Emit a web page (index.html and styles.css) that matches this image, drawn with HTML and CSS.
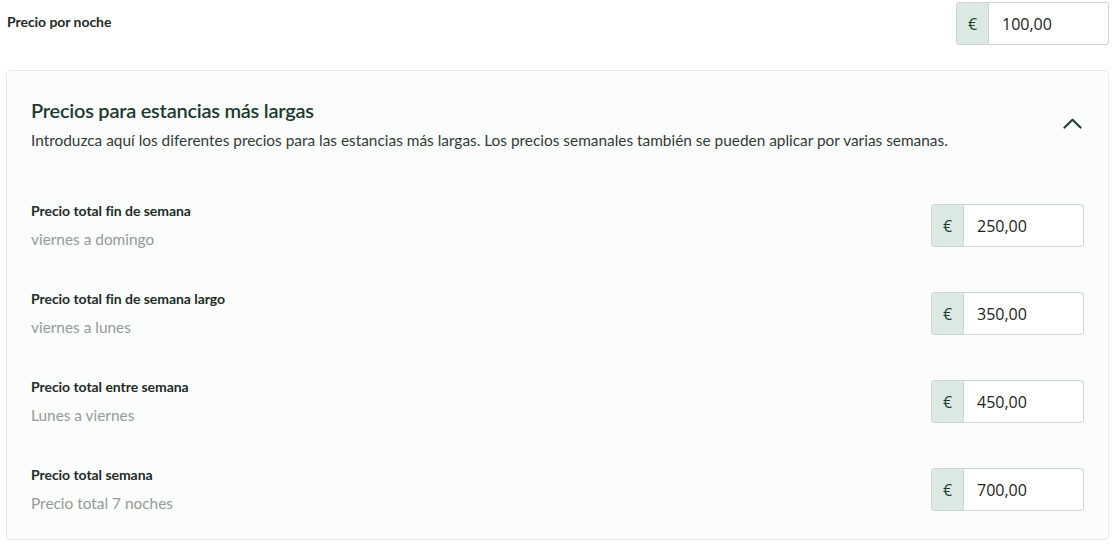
FILE: index.html
```html
<!DOCTYPE html>
<html lang="es">
<head>
    <meta charset="UTF-8">
    <meta name="viewport" content="width=device-width, initial-scale=1.0">
    <title>Precios</title>
    <link rel="stylesheet" href="styles.css">
</head>
<body>
    <div class="page">
        <div class="base-row">
            <label class="base-label" for="nightPrice">Precio por noche</label>
            <div class="price-input">
                <span class="currency">€</span>
                <input type="text" id="nightPrice" value="100,00">
            </div>
        </div>

        <div class="panel">
            <div class="panel-head">
                <div>
                    <h2 class="panel-title">Precios para estancias más largas</h2>
                    <p class="panel-desc">Introduzca aquí los diferentes precios para las estancias más largas. Los precios semanales también se pueden aplicar por varias semanas.</p>
                </div>
                <button class="toggle" aria-label="Cerrar">
                    <svg width="19" height="11" viewBox="0 0 19 11" fill="none" stroke="#1f4134" stroke-width="2.2" stroke-linecap="round" stroke-linejoin="round">
                        <path d="M1.5 9.5 L9.5 1.8 L17.5 9.5"/>
                    </svg>
                </button>
            </div>

            <div class="price-row">
                <div class="row-text">
                    <label class="row-label" for="weekendPrice">Precio total fin de semana</label>
                    <div class="row-sub">viernes a domingo</div>
                </div>
                <div class="price-input">
                    <span class="currency">€</span>
                    <input type="text" id="weekendPrice" value="250,00">
                </div>
            </div>

            <div class="price-row">
                <div class="row-text">
                    <label class="row-label" for="longWeekendPrice">Precio total fin de semana largo</label>
                    <div class="row-sub">viernes a lunes</div>
                </div>
                <div class="price-input">
                    <span class="currency">€</span>
                    <input type="text" id="longWeekendPrice" value="350,00">
                </div>
            </div>

            <div class="price-row">
                <div class="row-text">
                    <label class="row-label" for="midweekPrice">Precio total entre semana</label>
                    <div class="row-sub">Lunes a viernes</div>
                </div>
                <div class="price-input">
                    <span class="currency">€</span>
                    <input type="text" id="midweekPrice" value="450,00">
                </div>
            </div>

            <div class="price-row">
                <div class="row-text">
                    <label class="row-label" for="weekPrice">Precio total semana</label>
                    <div class="row-sub">Precio total 7 noches</div>
                </div>
                <div class="price-input">
                    <span class="currency">€</span>
                    <input type="text" id="weekPrice" value="700,00">
                </div>
            </div>
        </div>
    </div>
</body>
</html>
```

FILE: styles.css
```css
body {
    margin: 0;
    font-family: Lato, "Open Sans", sans-serif;
    color: #1f2b28;
    background: #ffffff;
}
.page {
    margin: 0 8px 0 6px;
}
.base-row {
    display: flex;
    justify-content: space-between;
    align-items: flex-start;
    padding-top: 2px;
}
.base-label {
    padding: 10px 0 0 1px;
    font-size: 14px;
    line-height: 20px;
    font-weight: bold;
    letter-spacing: -0.05px;
}
.price-input {
    display: flex;
    width: 153px;
    height: 43px;
    box-sizing: border-box;
    border: 1px solid #ccd6d2;
    border-radius: 3px;
    overflow: hidden;
    background: #ffffff;
}
.currency {
    width: 31px;
    flex: none;
    display: flex;
    align-items: center;
    justify-content: center;
    background: #dce8e2;
    border-right: 1px solid #ccd6d2;
    color: #1f4134;
    font-family: "Open Sans", sans-serif;
    font-size: 16px;
}
.price-input input {
    flex: 1;
    min-width: 0;
    border: none;
    outline: none;
    padding: 0 0 0 13px;
    font-family: "Open Sans", sans-serif;
    font-size: 16px;
    color: #1c2422;
    background: transparent;
}
.panel {
    margin-top: 25px;
    padding: 25px 24px 24px;
    border: 1px solid #e4ebe8;
    border-radius: 4px;
    background: #fafdfc;
}
.panel-head {
    display: flex;
    justify-content: space-between;
    align-items: flex-start;
    margin-bottom: 49px;
}
.panel-title {
    margin: 0;
    font-size: 20px;
    line-height: 28px;
    font-weight: 600;
    color: #1d3a31;
    letter-spacing: -0.25px;
}
.panel-desc {
    margin: 4px 0 0;
    font-size: 15.4px;
    line-height: 24px;
    color: #333b38;
}
.toggle {
    margin: 22px 2px 0 0;
    padding: 0;
    border: none;
    background: none;
    cursor: pointer;
    line-height: 0;
}
.price-row {
    display: flex;
    justify-content: space-between;
    align-items: flex-start;
    margin-bottom: 38px;
}
.price-row:last-child {
    margin-bottom: 0;
}
.row-text {
    display: flex;
    flex-direction: column;
    gap: 6px;
}
.row-label {
    font-size: 14px;
    line-height: 20px;
    font-weight: bold;
    letter-spacing: -0.05px;
    color: #1f2b28;
}
.row-sub {
    font-size: 15.4px;
    line-height: 24px;
    color: #959a98;
}
.price-row .price-input {
    margin-top: 3px;
}
```
